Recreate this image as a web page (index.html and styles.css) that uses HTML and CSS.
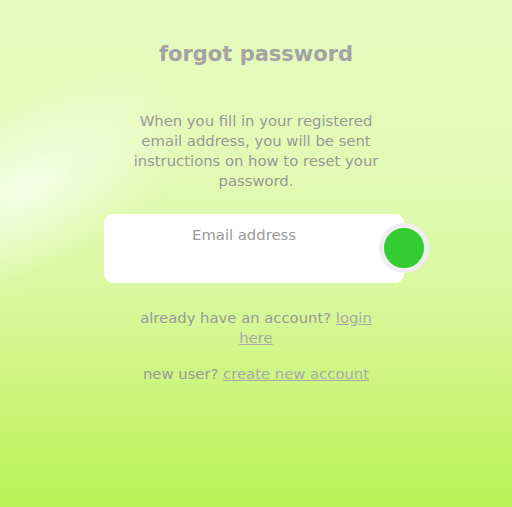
FILE: index.html
```html
<!DOCTYPE html>
<html>
<head>
<meta charset="utf-8">
<link rel="stylesheet" href="styles.css">
</head>
<body>
<div class="glare"></div>
<div class="page">
  <h1 class="title">forgot password</h1>
  <p class="intro">When you fill in your registered email address, you will be sent instructions on how to reset your password.</p>
  <form class="form">
    <div class="field">
      <input class="input" type="email" placeholder="Email address">
      <button class="go" type="button" aria-label="submit"></button>
    </div>
  </form>
  <p class="link-line">already have an account? <a href="#">login here</a></p>
  <p class="link-line second">new user? <a href="#">create new account</a></p>
</div>
</body>
</html>
```

FILE: styles.css
```css
html, body {
  margin: 0;
  padding: 0;
  height: 100%;
}
body {
  position: relative;
  overflow: hidden;
  font-family: "DejaVu Sans", sans-serif;
  color: #989898;
  background: linear-gradient(180deg, #e6fbc0 0%, #e2fab4 35%, #d8f89c 60%, #c8f473 82%, #b8f257 100%);
  min-height: 507px;
}
.glare {
  position: absolute;
  left: -130px;
  top: 95px;
  width: 340px;
  height: 170px;
  transform: rotate(-30deg);
  background: radial-gradient(ellipse at 45% 50%, rgba(255,255,255,0.7) 0%, rgba(255,255,255,0.35) 35%, rgba(255,255,255,0) 70%);
  filter: blur(8px);
  pointer-events: none;
}
.page {
  position: relative;
  width: 512px;
  display: flex;
  flex-direction: column;
  align-items: center;
  padding-top: 38px;
}
.title {
  margin: 0;
  font-size: 21px;
  font-weight: 700;
  color: #a3a3a3;
  line-height: 32px;
}
.intro {
  margin: 41px 0 0;
  width: 256px;
  text-align: center;
  font-size: 14.8px;
  line-height: 20px;
}
.form {
  margin: 23px 4px 0 0;
}
.field {
  position: relative;
  width: 300px;
  height: 69px;
  background: #fff;
  border-radius: 9px;
}
.input {
  display: block;
  box-sizing: border-box;
  width: 280px;
  height: 40px;
  border: 0;
  outline: 0;
  background: transparent;
  text-align: center;
  font-family: inherit;
  font-size: 14.8px;
  color: #888;
  padding: 0;
}
.input::placeholder {
  color: #9a9a9a;
}
.go {
  position: absolute;
  right: -25px;
  top: 9px;
  width: 50px;
  height: 50px;
  box-sizing: border-box;
  border-radius: 50%;
  border: 5px solid #efefef;
  background: #33cc33;
  padding: 0;
  cursor: pointer;
}
.link-line {
  margin: 25px 0 0;
  width: 250px;
  text-align: center;
  font-size: 14.8px;
  line-height: 20px;
}
.link-line.second {
  margin-top: 16px;
  width: 300px;
}
.link-line a {
  color: #a8a8a8;
}
```
